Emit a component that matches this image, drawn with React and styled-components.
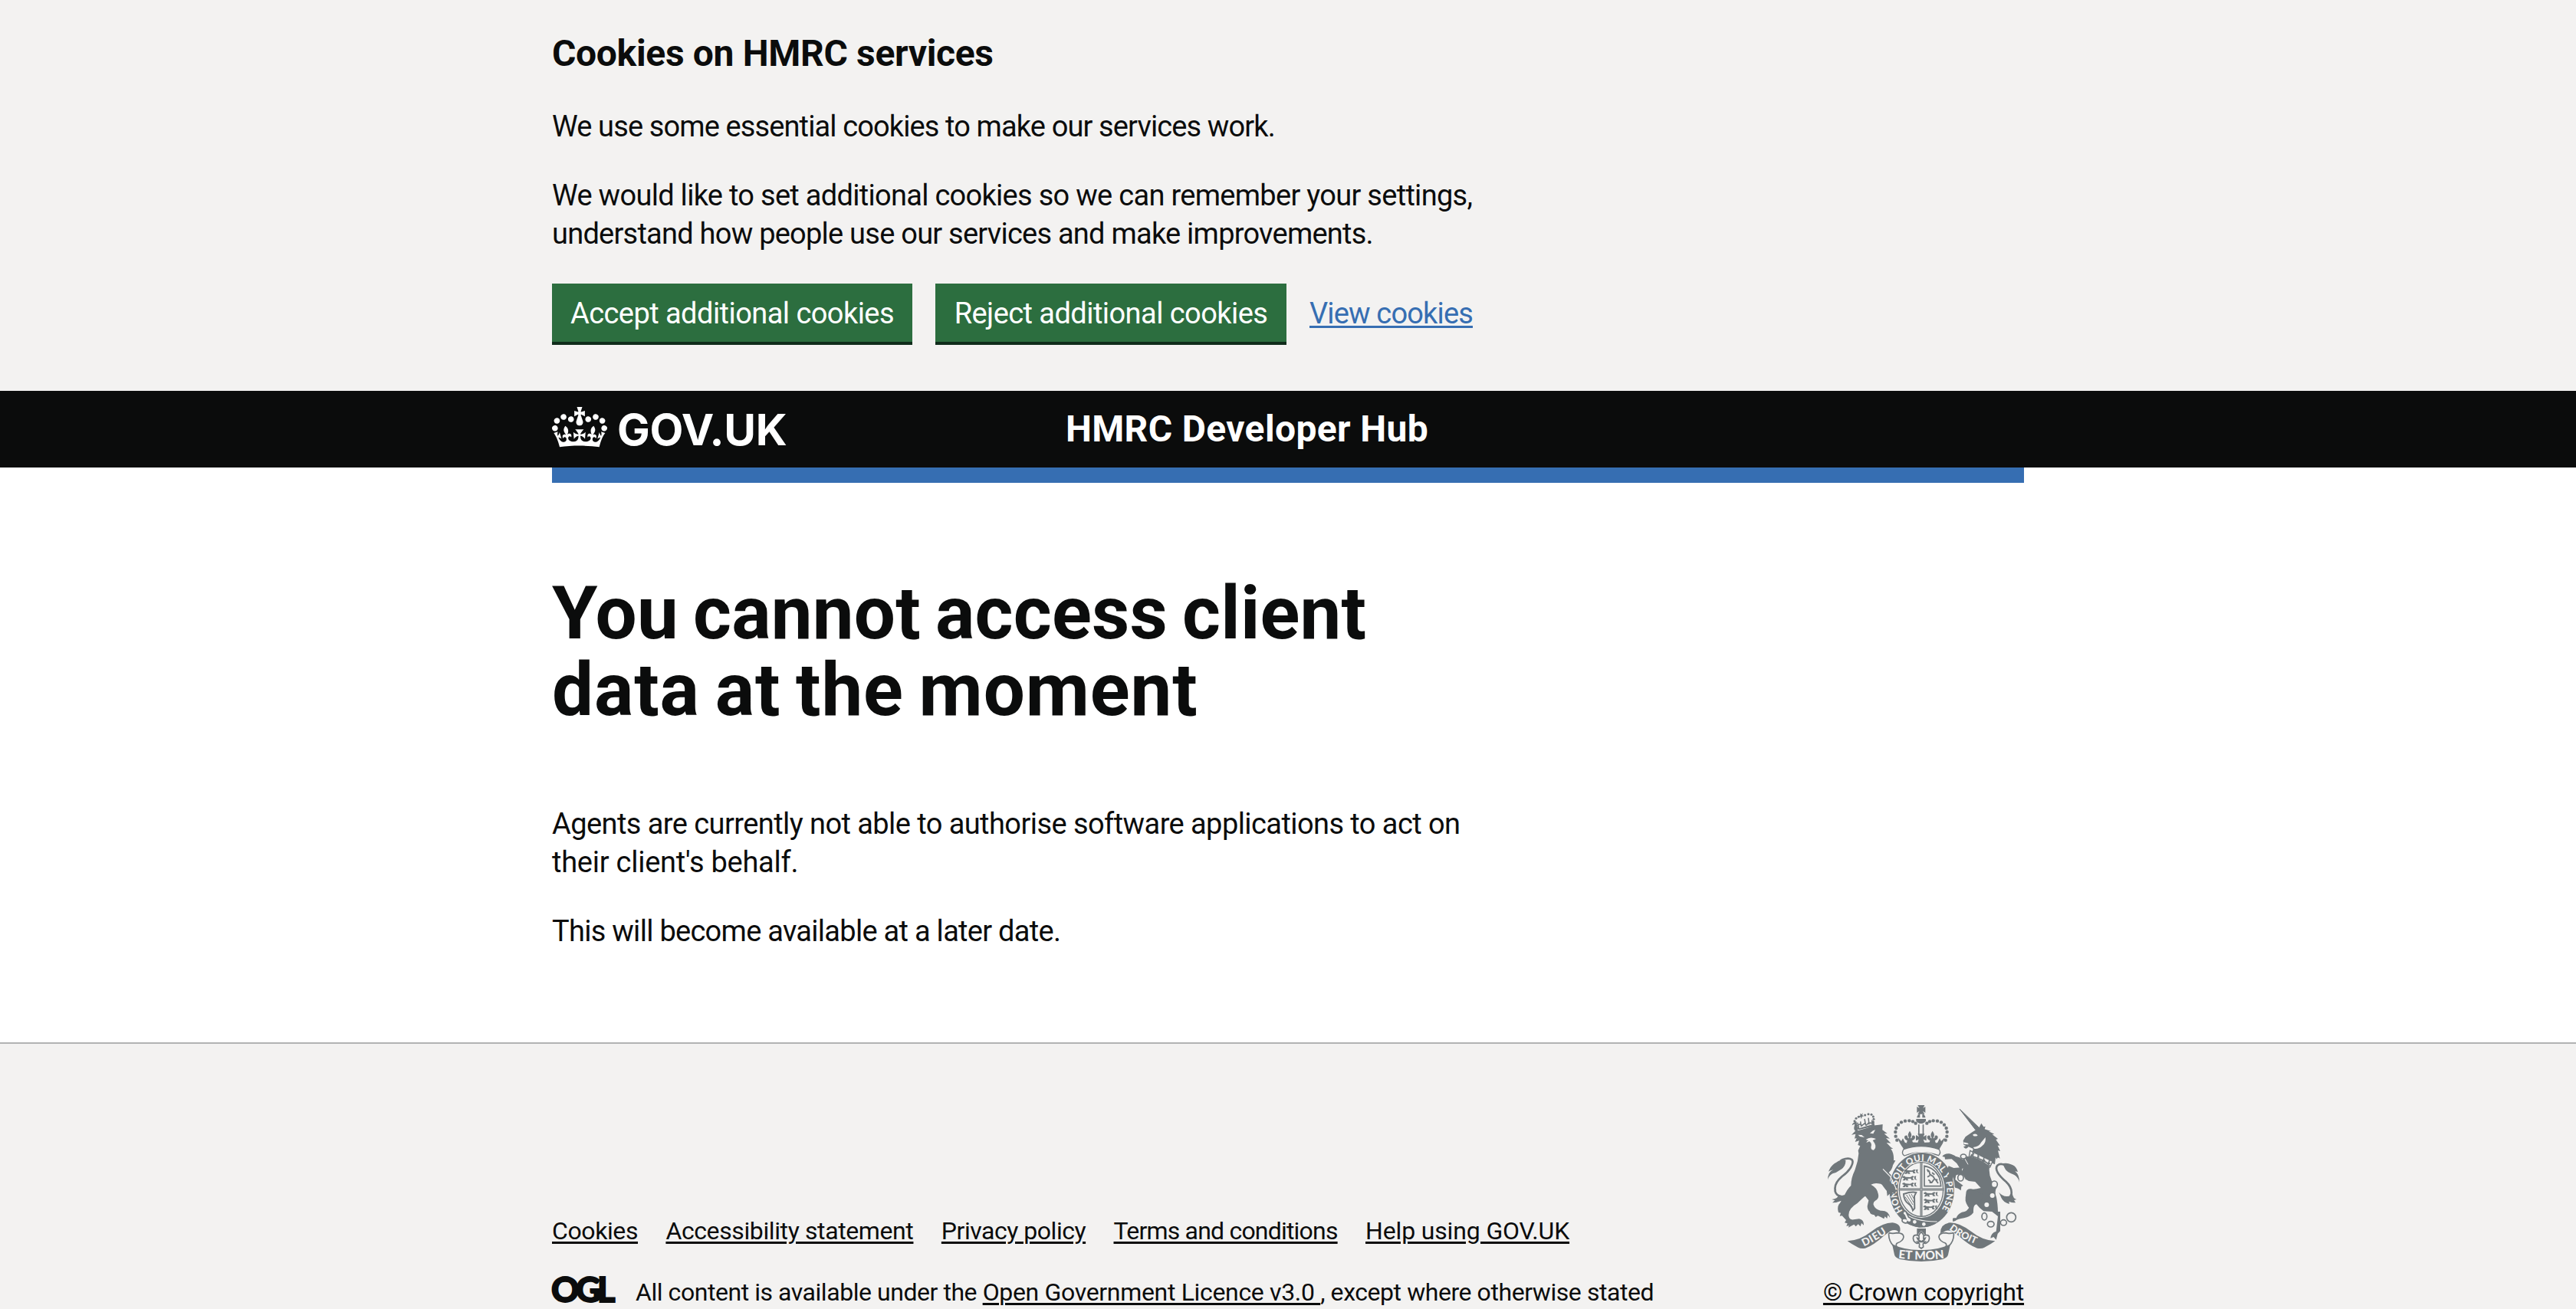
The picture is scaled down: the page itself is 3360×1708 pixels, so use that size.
import React from "react";
import styled, { createGlobalStyle } from "styled-components";

const ink = "#0b0c0c";
const paper = "#f3f2f1";
const blue = "#366eb2";
const crest = "#70777b";

const GlobalStyle = createGlobalStyle`
  html, body { margin: 0; padding: 0; background: ${paper}; }
  body {
    font-family: Roboto, "Liberation Sans", sans-serif;
    color: ${ink};
    overflow: hidden;
  }
  *, *::before, *::after { box-sizing: border-box; }
`;

const Page = styled.div`
  display: flex;
  flex-direction: column;
  height: 100vh;
  overflow: hidden;
`;

const Container = styled.div`
  width: 1920px;
  margin: 0 auto;
`;

const Tracked = styled.span`
  letter-spacing: ${(p) => p.$by}px;
  word-spacing: ${(p) => p.$gap || 0}px;
  white-space: nowrap;
`;

const Line = styled(Tracked)`
  display: block;
`;

const Banner = styled.section`
  flex: none;
  height: 510px;
  padding-top: 40px;
  background: ${paper};
`;

const BannerTitle = styled.h2`
  margin: 0 0 40px;
  font-size: 48px;
  line-height: 60px;
  font-weight: 700;
`;

const Body = styled.p`
  margin: 0 0 40px;
  font-size: 38px;
  line-height: 50px;
`;

const Actions = styled.div`
  display: flex;
  align-items: flex-start;
  gap: 30px;
`;

const Button = styled.button`
  width: ${(p) => p.$width}px;
  height: 76px;
  padding: 1px 0 0;
  border: 0;
  border-radius: 0;
  background: #2c6e3f;
  box-shadow: 0 4px 0 #102c1b;
  color: #fff;
  font: inherit;
  font-size: 38px;
  line-height: 38px;
`;

const Link = styled.a`
  color: ${(p) => p.$color || ink};
  text-decoration: underline;
  text-decoration-thickness: 3px;
  text-underline-offset: 3px;
  letter-spacing: ${(p) => p.$by || 0}px;
  white-space: nowrap;
`;

const BannerLink = styled.div`
  font-size: 38px;
  line-height: 50px;
  padding-top: 14px;
`;

const Header = styled.header`
  flex: none;
  height: 100px;
  background: ${ink};
  color: #fff;
`;

const HeaderRow = styled(Container)`
  display: grid;
  grid-template-columns: 670px 1fr;
  height: 100px;
`;

const Logo = styled.svg`
  display: block;
  width: 320px;
  height: 90px;
  margin-top: 8px;
  fill: currentColor;
  overflow: visible;
`;

const Wordmark = styled.text`
  font-family: Inter, sans-serif;
  font-size: 57px;
  font-weight: 700;
  letter-spacing: -0.3px;
`;

const ServiceName = styled.div`
  font-size: 48px;
  line-height: 60px;
  font-weight: 700;
  padding-top: 20px;
`;

const BlueBar = styled(Container)`
  height: 20px;
  background: ${blue};
`;

const Main = styled.main`
  flex: none;
  height: 750px;
  background: #fff;
`;

const Content = styled(Container)`
  padding-top: 120px;
`;

const Heading = styled.h1`
  margin: 0 0 100px;
  font-size: 96px;
  line-height: 100px;
  font-weight: 700;
`;

const Footer = styled.footer`
  flex: none;
  border-top: 2px solid #b1b3b3;
  background: ${paper};
  padding: 80px 0 50px;
  font-size: 32px;
  line-height: 40px;
`;

const FooterRow = styled(Container)`
  display: flex;
  justify-content: space-between;
  align-items: flex-end;
`;

const FooterLinks = styled.ul`
  display: flex;
  gap: 36.4px;
  list-style: none;
  margin: 0 0 40px;
  padding: 0;
`;

const Licence = styled.div`
  display: flex;
  align-items: flex-start;
`;

const Ogl = styled.svg`
  display: block;
  width: 84px;
  height: 40px;
  margin-right: 25px;
  fill: ${ink};
  overflow: visible;
`;

const OglText = styled.text`
  font-family: Lato, sans-serif;
  font-weight: 900;
  font-size: 45px;
  stroke: ${ink};
  stroke-width: 1.8px;
`;

const Copyright = styled.div`
  display: flex;
  flex-direction: column;
  align-items: center;
  width: 262px;
`;

const ArmsSvg = styled.svg`
  display: block;
  width: 250px;
  height: 204px;
  margin-bottom: 20px;
`;

const Motto = styled.text`
  font-family: Lato, sans-serif;
  font-weight: 900;
  font-size: ${(p) => p.$size}px;
  letter-spacing: ${(p) => p.$by || 0}px;
  fill: ${paper};
`;

function Crown() {
  return (
    <path
      transform="translate(0 13) scale(.5455)"
      d="M25 30.2c3.5 1.5 7.7-.2 9.1-3.7 1.5-3.6-.2-7.8-3.9-9.2-3.6-1.4-7.6.3-9.1 3.9-1.4 3.5.3 7.5 3.9 9zM9 39.5c3.6 1.5 7.8-.2 9.2-3.7 1.5-3.6-.2-7.8-3.9-9.1-3.6-1.5-7.6.2-9.1 3.8-1.4 3.5.3 7.5 3.8 9zM4.4 57.2c3.5 1.5 7.7-.2 9.1-3.8 1.5-3.6-.2-7.7-3.9-9.1-3.5-1.5-7.6.3-9.1 3.8-1.4 3.5.3 7.6 3.9 9.1zm38.3-21.4c3.5 1.5 7.7-.2 9.1-3.8 1.5-3.6-.2-7.7-3.9-9.1-3.6-1.5-7.6.3-9.1 3.8-1.3 3.6.4 7.7 3.9 9.1zm64.4-5.6c-3.6 1.5-7.8-.2-9.1-3.7-1.5-3.6.2-7.8 3.8-9.2 3.6-1.4 7.7.3 9.2 3.9 1.3 3.5-.4 7.5-3.9 9zm15.9 9.3c-3.6 1.5-7.7-.2-9.1-3.7-1.5-3.6.2-7.8 3.7-9.1 3.6-1.5 7.7.2 9.2 3.8 1.5 3.5-.3 7.5-3.8 9zm4.7 17.7c-3.6 1.5-7.8-.2-9.2-3.8-1.5-3.6.2-7.7 3.9-9.1 3.6-1.5 7.7.3 9.2 3.8 1.3 3.5-.4 7.6-3.9 9.1zM89.3 35.8c-3.6 1.5-7.8-.2-9.2-3.8-1.4-3.6.2-7.7 3.9-9.1 3.6-1.5 7.7.3 9.2 3.8 1.4 3.6-.3 7.7-3.9 9.1zM69.7 17.7l8.9 4.7V9.3l-8.9 2.8c-.2-.3-.5-.6-.9-.9L72.4 0H59.6l3.5 11.2c-.3.3-.6.5-.9.9l-8.8-2.8v13.1l8.8-4.7c.3.3.6.7.9.9l-5 15.4v.1c-.2.8-.4 1.6-.4 2.4 0 4.1 3.1 7.5 7 8.1h.2c.3 0 .7.1 1 .1.4 0 .7 0 1-.1h.2c4-.6 7.1-4.1 7.1-8.1 0-.8-.1-1.7-.4-2.4V34l-5.1-15.4c.4-.2.7-.6 1-.9zM66 92.8c16.9 0 32.8 1.1 47.1 3.2 4-16.9 8.9-26.7 14-33.5l-9.6-3.4c1 4.9 1.1 7.2 0 10.2-1.5-1.4-3-4.3-4.2-8.7L108.6 76c2.8-2 5-3.2 7.5-3.3-4.4 9.4-10 11.9-13.6 11.2-4.3-.8-6.3-4.6-5.6-7.9 1-4.7 5.7-5.9 8-.5 4.3-8.7-3-11.4-7.6-8.8 7.1-7.2 7.9-13.5 2.1-21.1-8 6.1-8.1 12.3-4.5 20.8-4.7-5.4-12.1-2.5-9.5 6.2 3.4-5.2 7.9-2 7.2 3.1-.6 4.3-6.4 7.8-13.5 7.2-10.3-.9-10.9-8-11.2-13.8 2.5-.5 7.1 1.8 11 7.3L80.2 60c-4.1 4.4-8 5.3-12.3 5.4 1.4-4.4 8-11.6 8-11.6H55.5s6.4 7.2 7.9 11.6c-4.2-.1-8-1-12.3-5.4l1.4 16.4c3.9-5.5 8.5-7.7 10.9-7.3-.3 5.8-.9 12.8-11.1 13.8-7.2.6-12.9-2.9-13.5-7.2-.7-5 3.8-8.3 7.1-3.1 2.7-8.7-4.6-11.6-9.4-6.2 3.7-8.5 3.6-14.7-4.6-20.8-5.8 7.6-5 13.9 2.2 21.1-4.7-2.6-11.9.1-7.7 8.8 2.3-5.5 7.1-4.2 8.1.5.7 3.3-1.3 7.1-5.7 7.9-3.5.7-9-1.8-13.5-11.2 2.5.1 4.7 1.3 7.5 3.3l-4.7-15.4c-1.2 4.4-2.7 7.2-4.3 8.7-1.1-3-.9-5.3 0-10.2l-9.5 3.4c5 6.9 9.9 16.7 14 33.5 14.8-2.1 30.8-3.2 47.7-3.2z"
    />
  );
}

const crownPearls = [
  [343, 203], [338, 188], [337, 171], [340, 156], [348, 143], [360, 133], [375, 128], [391, 127], [405, 130], [416, 137],
];
const lionPearls = [
  [186, 146], [180, 138], [177, 128], [183, 118], [193, 112], [218, 105], [231, 101], [243, 103], [250, 111], [252, 121], [250, 132],
];
const chain = [
  [603, 267, 11, 9], [592, 350, 11, 13], [724, 376, 12, 13], [685, 502, 10, 14], [710, 532, 13, 11], [760, 526, 12, 11], [790, 505, 18, 18],
];

/* One passant lion of the English quarters. */
function SmallLion({ x, y }) {
  return (
    <path
      transform={`translate(${x} ${y})`}
      d="M0 3l7-3 6 4 18 1 9-5 6 3-6 5 5 8h-9l-3-6-13 1 4 7H14l1-6-5 6H1l6-9-7-2zM46 2l8-2-2 10 6 6-10-2z"
    />
  );
}

function Lis({ x, y, s = 1 }) {
  return (
    <path
      transform={`translate(${x} ${y}) scale(${s})`}
      d="M0-22C5-14 8-9 7-3 6 1 4 4 3 8c4 1 6-2 6-6 0-8 12-8 13 1 1 8-5 13-12 15l3 8h-26l3-8c-7-2-13-7-12-15 1-9 13-9 13-1 0 4 2 7 6 6-1-4-3-7-4-11-1-6 2-11 7-19z"
    />
  );
}

function RoyalArms() {
  return (
    <ArmsSvg viewBox="72 66 750 612" fill={crest}>
      <defs>
        <path id="garter" d="M366 480A98 118 0 1 1 500 496" />
        <path id="dieu" d="M214 619Q262 598 326 550" />
        <path id="droit" d="M546 553Q600 594 680 621" />
        <path id="etmon" d="M340 664Q438 677 536 664" />
      </defs>

      {/* imperial crown */}
      <path d="M424 66h27l-6 12 9-6v24l-10-7 7 12h-27l7-12-10 7V72l10 6zM421 112q3-10 12-12v15h-12zM454 112q-3-10-12-12v15h12zM418 120h38v8q-8 10-19 10t-19-10zM426 142h5v40h-5zM443 142h5v40h-5z" />
      {crownPearls.map(([x, y]) => (
        <g key={x + "-" + y}>
          <circle cx={x} cy={y} r="6.6" />
          <circle cx={876 - x} cy={y} r="6.6" />
        </g>
      ))}
      <Lis x={393} y={188} s={0.95} />
      <Lis x={482} y={188} s={0.95} />
      <path d="M424 178h27l-5 12 12-7v22l-12-5 5 14h-27l4-14-11 5v-22l12 7z" />
      <path d="M346 193l14 14 6-11 8 16q10 4 14-1l50 2 50-2q8 5 14 1l8-16 6 11 14-14q-6 22-14 33-6 9-8 16-70-25-138 0-2-8-9-16-9-12-15-33z" />
      <path d="M369 239q69-25 138 0 10 12-1 24-68-24-134 1-14-9-3-25z" fill={paper} stroke={crest} strokeWidth="4" />

      {/* lion */}
      <path d="M184 152q35-5 68-26l4 22q-34 8-64 15z" />
      <path d="M193 151l-3-15 9 7 4-15 8 14 8-21 4 19 10-15 3 13 8-9 2 13-50 14z" fill={paper} />
      <path d="M188 134l6 18M200 130l3 20M216 120l5 26M231 116l3 26M246 124l-2 16M190 144l10-4 6 6 10-8 8 6 9-10 10 3" fill="none" stroke={crest} strokeWidth="4.5" />
      <path d="M198 98l6 4 6-5-3 8 7 4-8 2-2 9-4-8-7-1 7-5z" />
      {lionPearls.map(([x, y]) => <circle key={x + "-" + y} cx={x} cy={y} r="4.6" />)}
      <path d="M190 166q32-8 68-21 14-2 29-4l-1 22 19 14-12 1 22 19-15-2 19 20-17-2 17 18 9 5-9 1q13 18 11 45l7 1-10 18q-3 18-16 29 17 16 24 40l8 33-5 18-5-16-5 24-7-16-9 10 1-18-10 4 5-15-9 1q-9-21-29-22-15-3-29 4 24 12 28 35 6 20-11 28-9 6-7 16 6 18 28 23 32-2 37 28l-9-11-3 14-8-8-4 9-11-6-13-6-8 5-6-8q-16-2-18-13-9-8-9-22l5-22-13-17q-7 4-31 28-35 20-34 47 1 19 19 17l22-3q19 4 18 25l-9-8-4 13-9-9-9 9-7-8-13 7-9 5 2-8-10 3 4-11-11-3 6-10-16-17-9 1 4-12-9-2q-6-19 2-32 18-17 19-30 14-31 28-43 0-30 14-58 14-35 16-68l-2-11 8-18-9-4 5-17-16 5 6-15-8 2 4-18-16 3 15-15q-10-6-1-28l-12 6q2-11 17-16z" />
      <path d="M191 182l14 1 11 9-18-3zM237 176l12-10 9-3-8 15zM221 201q17-14 40-3l-13 6q21 26 4 38-15 0-9-21 0-8-8-13l-12 5q2-7 9-8z" fill={paper} />
      <path d="M102 402q-8-28 26-57c32-22 49-55 38-66-14-10-38 0-45 6M100 400q4 22 28 24 22-3 29-12" fill="none" stroke={crest} strokeWidth="8" />
      <path d="M72 358q1-31 22-39-12 2-19 7 10-26 33-37 12-10 34-8 2 25-20 38-16 12-31 15-14 8-19 24zM158 408q-8 30-38 42l5-10q-18 8-35 8l10-9-12-4q25-3 27-19 14 10 31-3z" />

      {/* unicorn */}
      <path d="M588 81l80 77-12 12z" stroke={crest} strokeWidth="3" strokeLinejoin="round" />
      <path d="M602 205l9-15 24-17q13-10 25-11l13-25 9 14 7-2-3 11 25 8-9 1 22 10-8 2 22 17-8 3 16 23h-9l10 22-9-2 8 31q-11-8-12 3l-5-7-3 27q-10-2-14-11l-40-20-35-15 4-15-18-8q-11 14-20 0l10-4-9-4z" />
      <path d="M640 181q13-6 19 4-12 5-18 0zM689 192q4 22-13 34-14 13-30 11l-5-6q24-3 31-19 8-9 17-20zM604 211l17 4 2 5-18-1z" fill={paper} />
      <path d="M629 244l88 42-10 23q-37-32-82-42z" fill={paper} stroke={crest} strokeWidth="4" />
      <path d="M633 262l12-6M640 250v18M653 274l12-6M661 258l-2 20M676 286l12-5M684 268l-4 22M698 299l10-6M705 282l-7 22M630 264l20 6 22 9 22 12 14 12" fill="none" stroke={crest} strokeWidth="5" />
      <path d="M618 266q48 7 87 42-4 27 9 55l22 22q-14 17-4 42 5 23 6 56h9v76l-10 10-6 24-10-11-12 5q2-21 22-27l7-59-23-18-33-2q-19-14-28-27-14 3-12 33-13 17-37 21-25 4-34 11l-9 3q-3-14 2-14h11q4-15 22-23 22-1 30-22-14-32-14-50 0-23 20-19 12 3 38-4l-22-24-25-3q-22-8-30-29-13 2-20 6l-3 17 15 12 16 12-7 4-2 15-11-8-11-3-9-10q-6 0-15-3l-5-16-8-6 13-6-16-13-2-14 15-5 19 6 29-4-15-24-20-17-26 1-1-9-10-2q9-13 28-11 18 5 24 10 17 3 28 13z" />
      <path d="M623 402q26-8 60 17-9 26-30 34-18 5-12 31-26-22-30-44-2-28 12-38z" />
      <path d="M600 314q-9 18 9 40M608 275l13 23" fill="none" stroke={paper} strokeWidth="3" />
      {chain.map(([x, y, rx, ry]) => (
        <ellipse key={x} cx={x} cy={y} rx={rx} ry={ry} fill={paper} stroke={crest} strokeWidth="5" />
      ))}
      <circle cx="716" cy="420" r="9" fill={paper} />
      <circle cx="694" cy="456" r="9" fill={paper} />
      <path d="M790 418q6-27-20-52c-31-26-46-50-34-64 13-11 31-2 38 5M790 415q-6 23-30 20" fill="none" stroke={crest} strokeWidth="8" />
      <path d="M822 368q0-30-17-43l11 2q-7-24-27-29-12-7-31-4 4 23 20 34 12 7 24 11 16 10 20 29zM742 407q12 15 31 16 18 0 21-12 4 23 17 24l-10 3 6 10q-17 0-25-5v10q-24-8-31-25z" />

      {/* garter and shield */}
      <ellipse cx="440" cy="398" rx="130" ry="149" fill={paper} />
      <ellipse cx="440" cy="398" rx="127" ry="146" />
      <ellipse cx="438" cy="396" rx="92" ry="111" fill={paper} />
      <ellipse cx="438" cy="396" rx="86" ry="106" fill="none" stroke={crest} strokeWidth="4" />
      <path d="M438 289v212M350 396h177" fill="none" stroke={crest} strokeWidth="9" />
      <path d="M438 290v210M352 396h174" fill="none" stroke={paper} strokeWidth="1.5" />
      <SmallLion x={371} y={317} />
      <SmallLion x={364} y={343} />
      <SmallLion x={364} y={369} />
      <SmallLion x={448} y={406} />
      <SmallLion x={448} y={432} />
      <SmallLion x={446} y={458} />
      <path d="M450 304q38 6 58 44 6 17 7 35h-65z" fill="none" stroke={crest} strokeWidth="5" />
      <path d="M460 318l9 7 3 12 12 8 8 12 10 2M480 330l10 8M472 341l-10 6M488 356l-9 13h-9M494 358l10 14M466 358l9 8M462 326l8-3" fill="none" stroke={crest} strokeWidth="5.5" />
      <path d="M369 414q30-10 49-6l-7 14 1 48-7 8q-4-17-17-26-18-12-19-38z" fill="none" stroke={crest} strokeWidth="6" />
      <path d="M380 417l25 39M390 415l18 32M399 414l10 19M375 425l26 38" fill="none" stroke={crest} strokeWidth="3" />
      <path d="M371 491q57 42 124 18l10 12q-28 24-75 24-40-7-62-26z" />
      <path d="M372 490q44 33 128 32" fill="none" stroke={paper} strokeWidth="3.5" />
      <path d="M373 527q-13-3-9-15 7-4 14-1l-6-14q-10-6-3-15 9-4 12 7l8 16q14 6 9 16-7 7-14 1-2 8-11 5z" fill={paper} stroke={crest} strokeWidth="5" />
      <circle cx="412" cy="523" r="7" fill={paper} />
      <circle cx="448" cy="532" r="7" fill={paper} />
      <Motto $size={35} $by={0.6}><textPath href="#garter">HONI SOIT QUI MAL Y PENSE</textPath></Motto>
      <path d="M286 330l24 21 14 31q14 8 15 20l-3 12-11-6-3 18-8-13-9 9-2-20q-20-24-28-42z" />
      <path d="M288 316l30 31 22 47" fill="none" stroke={paper} strokeWidth="3.5" />
      <path d="M545 304l20 8 28-2 14 30-28-2-16 8-4 20-14-6-6-18 10-5-10-18z" />

      {/* badge under the shield */}
      <path d="M421 549h35v26q-8-3-10-9l-8-8-9 9q-2 6-8 9z" />
      <g fill={paper} stroke={crest} strokeWidth="5">
        <path d="M438 562q19 19 6 37h-12q-13-18 6-37z" />
        <path d="M430 604q-10 8-21-6-9-24 11-24 12 2 9 14l-7-2q5 12 10 11zM446 604q10 8 21-6 9-24-11-24-12 2-9 14l7-2q-5 12-10 11z" />
        <path d="M422 601h32l-9 8 1 12-8 6-8-6 1-12z" />
      </g>

      {/* scroll */}
      <path d="M149 598q51-3 93-37 47-35 83-35 35 4 30 34-7 11-9-1-13-8-29 0l-26 19q-39 36-72 48-18 3-28-3-25-12-42-25z" />
      <path d="M727 598q-51-3-93-37-47-35-83-35-39 5-38 42 6-3 12-5 16-13 36-1l24 16q39 36 72 48 18 3 28-3 25-12 42-25z" />
      <path d="M311 566q15 4 31 0 27 0 27 16-2 16-25 24-8 5-1 16M565 566q-15 4-31 0-27 0-27 16 2 16 25 24 8 5 1 16M311 568q-2 28 19 50M565 568q2 28-19 50" fill="none" stroke={crest} strokeWidth="5" />
      <path d="M324 610q50 25 114 23 64 2 114-23l-9 42q-3 11-20 17-85 18-170 0-17-6-20-17z" />
      <Motto $size={41} $by={2}><textPath href="#dieu">DIEU</textPath></Motto>
      <Motto $size={38}><textPath href="#droit">DROIT</textPath></Motto>
      <Motto $size={46}><textPath href="#etmon" startOffset="50%" textAnchor="middle">ET MON</textPath></Motto>
    </ArmsSvg>
  );
}

const footerLinks = [
  ["Cookies", -0.4],
  ["Accessibility statement", -0.39],
  ["Privacy policy", -0.48],
  ["Terms and conditions", -0.8],
  ["Help using GOV.UK", -0.15],
];

export default function App() {
  return (
    <Page>
      <GlobalStyle />
      <Banner>
        <Container>
          <BannerTitle><Tracked $by={-0.33}>Cookies on HMRC services</Tracked></BannerTitle>
          <Body><Tracked $by={-0.88}>We use some essential cookies to make our services work.</Tracked></Body>
          <Body>
            <Line $by={-0.71}>We would like to set additional cookies so we can remember your settings,</Line>
            <Line $by={-0.76}>understand how people use our services and make improvements.</Line>
          </Body>
          <Actions>
            <Button $width={470}><Tracked $by={-0.55}>Accept additional cookies</Tracked></Button>
            <Button $width={458}><Tracked $by={-0.55}>Reject additional cookies</Tracked></Button>
            <BannerLink><Link href="#" $color={blue} $by={-0.84}>View cookies</Link></BannerLink>
          </Actions>
        </Container>
      </Banner>
      <Header>
        <HeaderRow>
          <Logo viewBox="0 0 320 90">
            <Crown />
            <Wordmark x="85" y="63">GOV.UK</Wordmark>
          </Logo>
          <ServiceName><Tracked $by={0.35}>HMRC Developer Hub</Tracked></ServiceName>
        </HeaderRow>
      </Header>
      <Main>
        <BlueBar />
        <Content>
          <Heading>
            <Line $by={0.2} $gap={-5}>You cannot access client</Line>
            <Line $by={0.9} $gap={-5}>data at the moment</Line>
          </Heading>
          <Body>
            <Line $by={-0.57}>Agents are currently not able to authorise software applications to act on</Line>
            <Line $by={-0.25}>their client's behalf.</Line>
          </Body>
          <Body><Tracked $by={-0.72}>This will become available at a later date.</Tracked></Body>
        </Content>
      </Main>
      <Footer>
        <FooterRow>
          <div>
            <FooterLinks>
              {footerLinks.map(([label, by]) => (
                <li key={label}><Link href="#" $by={by}>{label}</Link></li>
              ))}
            </FooterLinks>
            <Licence>
              <Ogl viewBox="0 0 84 40"><OglText x="-1" y="33" textLength="83.5" lengthAdjust="spacing">OGL</OglText></Ogl>
              <div>
                <Tracked $by={-0.45}>All content is available under the </Tracked>
                <Link href="#" $by={-0.33}>Open Government Licence v3.0&nbsp;</Link>
                <Tracked $by={-0.44}>, except where otherwise stated</Tracked>
              </div>
            </Licence>
          </div>
          <Copyright>
            <RoyalArms />
            <Link href="#" $by={-0.17}>© Crown copyright</Link>
          </Copyright>
        </FooterRow>
      </Footer>
    </Page>
  );
}
